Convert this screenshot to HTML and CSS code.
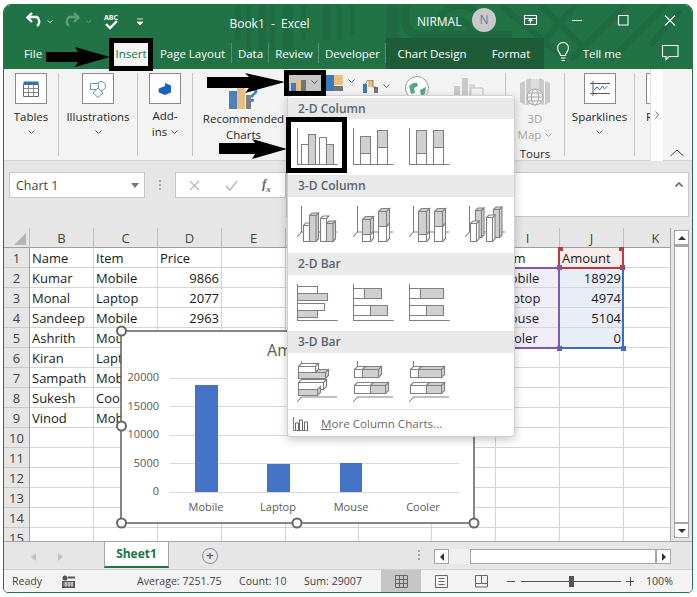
FILE: index.html
```html
<!DOCTYPE html>
<html lang="en">
<head>
<meta charset="utf-8">
<title>Book1 - Excel</title>
<link rel="stylesheet" href="styles.css">
</head>
<body>
<div class="window">
  <header class="head">
    <svg class="head-art" viewBox="4 5 687 64" aria-hidden="true">
      <g fill="#1f6a41">
        <path d="M235 5h5v35h-5zM246 5h5v45h-5zM258 5h7v45h-7zM270 5h4v45h-4zM283 5h9v45h-9zM300 5h5v35h-5zM322 5h8v35h-8zM336 5h5v35h-5zM350 5h4v30h-4z"/>
        <path d="M386 5h12v34h-12z"/>
      </g>
      <g fill="none" stroke="#1f6a41">
        <circle cx="460" cy="30" r="9" stroke-width="6"/>
        <circle cx="460" cy="30" r="24" stroke-width="6"/>
        <path d="M405 5v14q0 16 16 16h90" stroke-width="8"/>
        <path d="M500 5l60 50M540 5l50 50M520 68l55-63M570 60l55-55M610 60l55-55M650 45l30-35" stroke-width="6"/>
      </g>
    </svg>
    <div class="titlebar">
      <svg class="qat" viewBox="20 5 130 33" aria-hidden="true">
        <g fill="none" stroke="#fff" stroke-width="2.4">
          <path d="M37 26a5.6 5.6 0 0 0 0-9H28"/>
          <path d="M32 13l-4.5 4.5 4.5 4.5"/>
        </g>
        <g fill="none" stroke="#5f9e7c" stroke-width="2.4">
          <path d="M69 26a5.6 5.6 0 0 1 0-9H78"/>
          <path d="M74 13l4.5 4.5-4.5 4.5"/>
        </g>
        <g fill="none" stroke="#d7e6dd" stroke-width="1">
          <path d="M47.5 20.5l2.5 2 2.500-2"/>
          <path d="M86 20.500l2.500 2 2.500-2" stroke="#5f9e7c"/>
        </g>
        <text x="104" y="20" class="abc">ABC</text>
        <path d="M106 24l4 4 7-7" fill="none" stroke="#fff" stroke-width="2.4"/>
        <path d="M137 19h6M137 22h6l-3 3z" fill="#fff" stroke="#fff" stroke-width=".8"/>
      </svg>
      <div class="doc-title">Book1&nbsp; -&nbsp; Excel</div>
      <div class="user">NIRMAL</div>
      <div class="avatar">N</div>
      <svg class="win-ctl" viewBox="510 5 181 33" aria-hidden="true">
        <g fill="none" stroke="#fff" stroke-width="1.1">
          <path d="M524.5 15.500h12v9h-12zM524.5 18.500h12M530.500 23.500v-4M528.500 21l2-2 2 2"/>
          <path d="M572 20.500h10"/>
          <path d="M618.500 15.500h9.500v9.500h-9.500z"/>
          <path d="M665 15.500l10 10M675 15.500l-10 10"/>
        </g>
      </svg>
    </div>
    <nav class="tabs">
      <span class="tab tab-file">File</span>
      <span class="tab tab-insert">Insert</span>
      <span class="tab tab-layout sep">Page Layout</span>
      <span class="tab tab-data sep">Data</span>
      <span class="tab tab-review sep">Review</span>
      <span class="tab tab-dev sep">Developer</span>
      <div class="ctx">
        <span class="tab tab-design">Chart Design</span>
        <span class="tab tab-format">Format</span>
      </div>
      <svg class="bulb" viewBox="0 0 14 20" aria-hidden="true">
        <path d="M4.500 13.500c0-3-3-4-3-7.500a5.500 5.500 0 0 1 11 0c0 3.500-3 4.500-3 7.500zM5 16h4.500M5.500 18.500h3.500" fill="none" stroke="#fff" stroke-width="1.1"/>
      </svg>
      <span class="tab tab-tell">Tell me</span>
      <svg class="comment" viewBox="0 0 17 16" aria-hidden="true">
        <path d="M.5.500h15.500v11h-9l-3 3v-3h-3.500z" fill="none" stroke="#fff" stroke-width="1.1"/>
      </svg>
    </nav>
  </header>

  <section class="ribbon">
    <div class="group g-tables">
      <div class="rbtn">
        <span class="box">
          <svg class="ic" viewBox="0 0 16 16" aria-hidden="true"><path d="M.5 3.500h15v12h-15z" fill="#fff" stroke="#666"/><path d="M.5.500h15v3h-15z" fill="#2f6ec0"/><path d="M.5 7.500h15M.5 11.500h15M5.500 3.500v12M10.500 3.500v12" stroke="#888" fill="none"/></svg>
        </span>
        <span class="lbl">Tables</span>
        <svg class="chev" viewBox="0 0 7 4" aria-hidden="true"><path d="M.5.500l3 3 3-3"/></svg>
      </div>
    </div>
    <div class="group g-ill">
      <div class="rbtn">
        <span class="box">
          <svg class="ic ic-ill" viewBox="0 0 18 18" aria-hidden="true"><circle cx="12" cy="6" r="4.500" fill="#fff" stroke="#6b8fbe"/><path d="M1.500 3.500h8v6h-8z" fill="#fff" stroke="#6b8fbe"/><path d="M9 8l5 5-5 4.500-5-4.500z" fill="#fff" stroke="#6b8fbe"/></svg>
        </span>
        <span class="lbl">Illustrations</span>
        <svg class="chev" viewBox="0 0 7 4" aria-hidden="true"><path d="M.5.500l3 3 3-3"/></svg>
      </div>
    </div>
    <div class="group g-add">
      <div class="rbtn">
        <span class="box">
          <svg class="ic ic-add" viewBox="0 0 14 14" aria-hidden="true"><path d="M7 1l6 2.500v7l-6 2.500-3-1.300v-6.500l3-1.200z" fill="#1565c0"/><circle cx="3.500" cy="8.500" r="3" fill="#1565c0"/></svg>
        </span>
        <span class="lbl lbl-two">Add-<br>ins <svg class="chev chev-in" viewBox="0 0 7 4" aria-hidden="true"><path d="M.5.500l3 3 3-3"/></svg></span>
      </div>
    </div>
    <div class="group g-charts">
      <div class="rec">
        <svg class="rec-ic" viewBox="0 0 34 24" aria-hidden="true">
          <path d="M0 6h8v18h-8z" fill="#4f81bd"/><path d="M8 1h8v23h-8z" fill="#e8bf80"/><path d="M17 10h5v14h-5z" fill="#7f7f7f"/>
          <text x="19" y="17" class="qmark">?</text>
        </svg>
        <span class="rec-lbl">Recommended<br>Charts</span>
      </div>
      <div class="mini m-col">
        <svg class="mini-a" viewBox="0 0 15 12" aria-hidden="true"><path d="M0 4h5v8h-5z" fill="#3f79bd"/><path d="M5 0h5v12h-5z" fill="#e8bf80"/><path d="M10 1h5v11h-5z" fill="#737373"/></svg>
        <svg class="chev chev-mini" viewBox="0 0 7 4" aria-hidden="true"><path d="M.5.500l3 3 3-3"/></svg>
      </div>
      <div class="mini m-hier">
        <svg class="mini-b" viewBox="0 0 17 16" aria-hidden="true"><path d="M0 0h8v16h-8z" fill="#3f79bd"/><path d="M8 0h9v10h-9z" fill="#e8bf80"/><path d="M8 11h9v5h-9z" fill="#737373"/></svg>
        <svg class="chev chev-mini" viewBox="0 0 7 4" aria-hidden="true"><path d="M.5.500l3 3 3-3"/></svg>
      </div>
      <div class="mini m-line">
        <svg class="mini-c" viewBox="0 0 15 14" aria-hidden="true"><path d="M0 4h4v9h-4z" fill="#3f79bd"/><path d="M5 0h5v7h-5z" fill="#e8bf80"/><path d="M11 7h4v6h-4z" fill="#737373"/><path d="M2 4l3-4h5v7h3" fill="none" stroke="#444" stroke-width=".6"/></svg>
        <svg class="chev chev-mini" viewBox="0 0 7 4" aria-hidden="true"><path d="M.5.500l3 3 3-3"/></svg>
      </div>
      <svg class="globe" viewBox="0 0 24 24" aria-hidden="true"><circle cx="12" cy="12" r="11.500" fill="#fff" stroke="#9a9a9a"/><path d="M4 10c3-3 6-4 8-3l1 3-4 2 1 5-4 1zM15 14l6-3-1 7-4 2z" fill="#5aa88c"/></svg>
      <svg class="pivot" viewBox="0 0 30 18" aria-hidden="true"><path d="M0 8h6v10h-6zM8 0h6v18h-6z" fill="#c9c9c9"/><path d="M15 6h6v12h-6z" fill="#d9d9d9"/><path d="M17 10h12v8h-12z" fill="#f1f1f1" stroke="#bdbdbd"/></svg>
    </div>
    <div class="group g-tours">
      <svg class="map3d" viewBox="0 0 30 28" aria-hidden="true">
        <path d="M0 5l5-2v24l-5-3zM6 2l5-2v26l-5 1zM19 0l5 2v25l-5-1zM25 3l5 2v19l-5 3z" fill="#c9c9c9"/><path d="M11 1h8v25h-8z" fill="#dcdcdc"/>
        <g fill="#f3f3f3" stroke="#a8a8a8"><circle cx="15" cy="19" r="8"/><ellipse cx="15" cy="19" rx="3.500" ry="8"/></g>
        <path d="M7 19h16M8.500 15h13M8.500 23h13" stroke="#a8a8a8" fill="none"/>
      </svg>
      <span class="lbl lbl-off">3D<br>Map <svg class="chev chev-in chev-off" viewBox="0 0 7 4" aria-hidden="true"><path d="M.5.500l3 3 3-3"/></svg></span>
      <span class="lbl lbl-tours">Tours</span>
    </div>
    <div class="group g-spark">
      <div class="rbtn">
        <span class="box">
          <svg class="ic ic-spark" viewBox="0 0 20 16" aria-hidden="true"><path d="M3 0v15M0 2.500h20M0 12.500h20" stroke="#595959" fill="none"/><path d="M4 9l3-3 2.500 3 3-4 2 3 3-3" stroke="#2f6ec0" fill="none"/></svg>
        </span>
        <span class="lbl">Sparklines</span>
        <svg class="chev" viewBox="0 0 7 4" aria-hidden="true"><path d="M.5.500l3 3 3-3"/></svg>
      </div>
    </div>
    <div class="group g-filt">
      <span class="filt-box"></span>
      <span class="lbl lbl-f">F</span>
    </div>
    <div class="strip">
      <svg class="strip-ar" viewBox="0 0 4 8" aria-hidden="true"><path d="M.5.500l3 3.500-3 3.500"/></svg>
    </div>
    <svg class="collapse" viewBox="0 0 14 8" aria-hidden="true"><path d="M.5 7l6.500-6 6.500 6"/></svg>
  </section>

  <section class="fbar">
    <div class="namebox"><span>Chart 1</span><i class="nb-caret"></i></div>
    <div class="fdots"><i></i><i></i><i></i></div>
    <div class="fxbox">
      <svg class="fx-x" viewBox="0 0 12 12" aria-hidden="true"><path d="M1 1l10 10M11 1l-10 10"/></svg>
      <svg class="fx-c" viewBox="0 0 13 11" aria-hidden="true"><path d="M1 6l4 4 7-9"/></svg>
      <span class="fx-f">f<sub>x</sub></span>
    </div>
    <div class="finput">
      <svg class="f-up" viewBox="0 0 8 5" aria-hidden="true"><path d="M.5 4.500l3.500-3.500 3.500 3.500"/></svg>
    </div>
  </section>

  <section class="sheet">
    <div class="grid-wrap">
    <table class="grid">
      <colgroup>
        <col class="c-rh"><col class="c-n"><col class="c-n"><col class="c-n"><col class="c-n"><col class="c-w"><col class="c-w"><col class="c-n"><col class="c-n"><col class="c-n"><col class="c-n">
      </colgroup>
      <thead>
        <tr><th class="corner"><i class="tri"></i></th><th>B</th><th>C</th><th>D</th><th>E</th><th>F</th><th>G</th><th>H</th><th>I</th><th>J</th><th>K</th></tr>
      </thead>
      <tbody>
        <tr><th>1</th><td>Name</td><td>Item</td><td>Price</td><td></td><td></td><td></td><td></td><td>Item</td><td class="t-r">Amount</td><td></td></tr>
        <tr><th>2</th><td>Kumar</td><td>Mobile</td><td class="num">9866</td><td></td><td></td><td></td><td></td><td class="t-i">Mobile</td><td class="t-j num">18929</td><td></td></tr>
        <tr><th>3</th><td>Monal</td><td>Laptop</td><td class="num">2077</td><td></td><td></td><td></td><td></td><td class="t-i">Laptop</td><td class="t-j num">4974</td><td></td></tr>
        <tr><th>4</th><td>Sandeep</td><td>Mobile</td><td class="num">2963</td><td></td><td></td><td></td><td></td><td class="t-i">Mouse</td><td class="t-j num">5104</td><td></td></tr>
        <tr><th>5</th><td>Ashrith</td><td>Mouse</td><td></td><td></td><td></td><td></td><td></td><td class="t-i">Cooler</td><td class="t-j num">0</td><td></td></tr>
        <tr><th>6</th><td>Kiran</td><td>Laptop</td><td></td><td></td><td></td><td></td><td></td><td></td><td></td><td></td></tr>
        <tr><th>7</th><td>Sampath</td><td>Mobile</td><td></td><td></td><td></td><td></td><td></td><td></td><td></td><td></td></tr>
        <tr><th>8</th><td>Sukesh</td><td>Cooler</td><td></td><td></td><td></td><td></td><td></td><td></td><td></td><td></td></tr>
        <tr><th>9</th><td>Vinod</td><td>Mobile</td><td></td><td></td><td></td><td></td><td></td><td></td><td></td><td></td></tr>
        <tr><th>10</th><td></td><td></td><td></td><td></td><td></td><td></td><td></td><td></td><td></td><td></td></tr>
        <tr><th>11</th><td></td><td></td><td></td><td></td><td></td><td></td><td></td><td></td><td></td><td></td></tr>
        <tr><th>12</th><td></td><td></td><td></td><td></td><td></td><td></td><td></td><td></td><td></td><td></td></tr>
        <tr><th>13</th><td></td><td></td><td></td><td></td><td></td><td></td><td></td><td></td><td></td><td></td></tr>
        <tr><th>14</th><td></td><td></td><td></td><td></td><td></td><td></td><td></td><td></td><td></td><td></td></tr>
        <tr><th>15</th><td></td><td></td><td></td><td></td><td></td><td></td><td></td><td></td><td></td><td></td></tr>
      </tbody>
    </table>
    </div>
    <div class="vscroll">
      <span class="vbtn"><i class="up"></i></span>
      <span class="vthumb"></span>
      <span class="vbtn"><i class="down"></i></span>
    </div>
  </section>

  <section class="tabbar">
    <div class="nav"><i class="nav-l"></i><i class="nav-r"></i></div>
    <div class="sheet-tab">Sheet1</div>
    <div class="add-sheet">+</div>
    <div class="tdots"><i></i><i></i><i></i></div>
    <div class="hscroll">
      <span class="hbtn"><i class="left"></i></span>
      <span class="htrack"></span>
      <span class="hthumb"></span>
      <span class="hbtn"><i class="right"></i></span>
    </div>
  </section>

  <footer class="status">
    <span class="st-ready">Ready</span>
    <svg class="st-macro" viewBox="0 0 13 13" aria-hidden="true"><circle cx="3" cy="3" r="2.500" fill="#555"/><path d="M6 1.500h7v2h-7zM0 6h13v7h-13z" fill="#555"/><path d="M1.500 8h10M1.500 10h10M4 7v5M7 7v5M10 7v5" stroke="#f3f3f3" fill="none" stroke-width=".8"/></svg>
    <span class="st-avg">Average: 7251.75</span>
    <span class="st-cnt">Count: 10</span>
    <span class="st-sum">Sum: 29007</span>
    <span class="view view-on"><svg viewBox="0 0 13 13" aria-hidden="true"><path d="M.5.500h12v12h-12zM.5 4.500h12M.5 8.500h12M4.500.500v12M8.500.500v12"/></svg></span>
    <span class="view"><svg viewBox="0 0 13 13" aria-hidden="true"><path d="M.5.500h12v12h-12zM3.500 3.500h6M3.500 6.500h6M3.500 9.500h6"/></svg></span>
    <span class="view"><svg viewBox="0 0 13 13" aria-hidden="true"><path d="M.5 12v-11.500h12v11.500zM.5 8.500h12M6.500.500v8"/></svg></span>
    <span class="z-minus"></span>
    <span class="z-track"><i></i></span>
    <span class="z-plus"></span>
    <span class="z-val">100%</span>
  </footer>
</div>

<div class="range r-red"><i class="h h1"></i><i class="h h2"></i><i class="h h4"></i></div>
<div class="range r-purple"><i class="h h2"></i><i class="h h4"></i></div>
<div class="range r-blue"><i class="h h4"></i></div>

<svg class="chart" viewBox="114 324 368 206" role="img" aria-label="Amount chart">
  <rect x="121" y="331" width="353" height="192" fill="#fff" stroke="#5f5f5f" stroke-width="1.5"/>
  <text x="297" y="356" class="ch-title">Amount</text>
  <g stroke="#d9d9d9"><path d="M170 378.500h289M170 406.500h289M170 435.500h289M170 463.500h289M170 492.500h289"/></g>
  <g fill="#4472c4"><rect x="195" y="385" width="23" height="107"/><rect x="267" y="464" width="23" height="28"/><rect x="340" y="463" width="22" height="29"/></g>
  <g class="ch-y"><text x="159" y="381">20000</text><text x="159" y="410">15000</text><text x="159" y="438">10000</text><text x="159" y="467">5000</text><text x="159" y="495">0</text></g>
  <g class="ch-x"><text x="206" y="511">Mobile</text><text x="278" y="511">Laptop</text><text x="351" y="511">Mouse</text><text x="423" y="511">Cooler</text></g>
  <g fill="#fff" stroke="#666" stroke-width="2"><circle cx="121.5" cy="331" r="4.500"/><circle cx="121.5" cy="426" r="4.500"/><circle cx="121.5" cy="523" r="4.500"/><circle cx="297" cy="523" r="4.500"/><circle cx="474" cy="523" r="4.500"/></g>
</svg>

<aside class="menu">
  <h4 class="m-head m-first">2-D Column</h4>
  <div class="m-row">
    <svg viewBox="0 0 44 56" aria-hidden="true"><path class="ax" d="M.5 9v36.500h40"/><path class="w" d="M4.500 25.500h7v20h-7zM22.500 18.500h7v27h-7z"/><path class="g" d="M11.500 15.500h7v30h-7zM29.500 25.500h7v20h-7z"/></svg>
    <svg viewBox="0 0 44 56" aria-hidden="true"><path class="ax" d="M.5 9v36.500h40"/><path class="g" d="M7.500 17.500h10v17h-10zM24.500 11.500h10v17h-10z"/><path class="w" d="M7.500 34.500h10v11h-10zM24.500 28.500h10v17h-10z"/></svg>
    <svg viewBox="0 0 44 56" aria-hidden="true"><path class="ax" d="M.5 9v36.500h40"/><path class="g" d="M7.500 11.500h10v23h-10zM24.500 11.500h10v17h-10z"/><path class="w" d="M7.500 34.500h10v11h-10zM24.500 28.500h10v17h-10z"/></svg>
  </div>
  <h4 class="m-head">3-D Column</h4>
  <div class="m-row">
    <svg viewBox="0 0 44 56" aria-hidden="true"><path class="ax" d="M4.500 9v26M0 40l4.500-5h35.500"/>
      <path class="w" d="M6.500 28.500h6v16h-6zM6.500 28.500l2.500-2.500h6l-2.500 2.500"/><path class="g" d="M12.500 18.500h6.500v26h-6.500zM12.500 18.500l2.500-2.500h6.500l-2.500 2.500M19 18.500l2.500-2.500v26l-2.500 2.500z"/>
      <path class="w" d="M23.500 21.500h6v23h-6zM23.500 21.500l2.500-2.500h6l-2.500 2.500"/><path class="g" d="M29.500 26.500h6.500v18h-6.500zM29.500 26.500l2.500-2.500h6.500l-2.500 2.500M36 26.500l2.500-2.500v18l-2.500 2.500z"/></svg>
    <svg viewBox="0 0 44 56" aria-hidden="true"><path class="ax" d="M4.500 9v26M0 40l4.500-5h35.500"/>
      <path class="g" d="M9.500 22.500h8v15h-8zM9.500 22.500l3-3h8l-3 3M17.500 22.500l3-3v15l-3 3z"/><path class="w" d="M9.500 37.500h8v7h-8zM17.500 37.500l3-3v7l-3 3z"/>
      <path class="g" d="M25.500 14.500h8v15h-8zM25.500 14.500l3-3h8l-3 3M33.500 14.500l3-3v15l-3 3z"/><path class="w" d="M25.500 29.500h8v15h-8zM33.500 29.500l3-3v15l-3 3z"/></svg>
    <svg viewBox="0 0 44 56" aria-hidden="true"><path class="ax" d="M4.500 9v26M0 40l4.500-5h35.500"/>
      <path class="g" d="M9.500 14.500h8v23h-8zM9.500 14.500l3-3h8l-3 3M17.500 14.500l3-3v23l-3 3z"/><path class="w" d="M9.500 37.500h8v7h-8zM17.500 37.500l3-3v7l-3 3z"/>
      <path class="g" d="M25.500 14.500h8v15h-8zM25.500 14.500l3-3h8l-3 3M33.500 14.500l3-3v15l-3 3z"/><path class="w" d="M25.500 29.500h8v15h-8zM33.500 29.500l3-3v15l-3 3z"/></svg>
    <svg viewBox="0 0 44 56" aria-hidden="true"><path class="ax" d="M4.500 9v26M0 40l4.500-5h35.500"/>
      <path class="g" d="M10.500 13.500h6v27h-6zM10.500 13.500l2.500-2.500h6l-2.500 2.500M16.500 13.500l2.500-2.500v27l-2.500 2.500z"/><path class="w" d="M5.500 26.500h6v18h-6zM5.500 26.500l2.500-2.500h6l-2.500 2.500M11.500 26.500l2.500-2.500v18l-2.500 2.500z"/>
      <path class="g" d="M28.500 12.500h6v28h-6zM28.500 12.500l2.500-2.500h6l-2.500 2.500M34.500 12.500l2.500-2.500v28l-2.500 2.500z"/><path class="w" d="M21.500 20.500h6v24h-6zM21.500 20.500l2.500-2.500h6l-2.500 2.500M27.500 20.500l2.500-2.500v24l-2.500 2.500z"/></svg>
  </div>
  <h4 class="m-head">2-D Bar</h4>
  <div class="m-row">
    <svg viewBox="0 0 44 56" aria-hidden="true"><path class="ax" d="M.5 9v36.500h40"/><path class="w" d="M.5 11.500h20v7h-20zM.5 28.500h27v7h-27z"/><path class="g" d="M.5 18.500h30v7h-30zM.5 35.500h20v7h-20z"/></svg>
    <svg viewBox="0 0 44 56" aria-hidden="true"><path class="ax" d="M.5 9v36.500h40"/><path class="w" d="M.5 13.500h11v10h-11zM.5 30.500h17v10h-17z"/><path class="g" d="M11.500 13.500h17v10h-17zM17.500 30.500h17v10h-17z"/></svg>
    <svg viewBox="0 0 44 56" aria-hidden="true"><path class="ax" d="M.5 9v36.500h40"/><path class="w" d="M.5 13.500h11v10h-11zM.5 30.500h17v10h-17z"/><path class="g" d="M11.500 13.500h23v10h-23zM17.500 30.500h17v10h-17z"/></svg>
  </div>
  <h4 class="m-head">3-D Bar</h4>
  <div class="m-row">
    <svg viewBox="0 0 44 56" aria-hidden="true"><path class="ax" d="M4.500 8v5M4.500 44h35.500M0 49l4.500-5"/>
      <path class="w" d="M1.500 13.500h17v6h-17zM1.500 13.500l3-3h17l-3 3M18.500 13.500l3-3v6l-3 3z"/><path class="g" d="M1.500 19.500h27v6h-27zM18.500 19.500l3-3h10l-3 3M28.500 19.500l3-3v6l-3 3z"/>
      <path class="w" d="M1.500 29.500h25v7h-25zM1.500 29.500l3-3h25l-3 3M26.500 29.500l3-3v7l-3 3z"/><path class="g" d="M1.500 36.500h19v6h-19zM20.500 36.500l3-3v6l-3 3z"/></svg>
    <svg viewBox="0 0 44 56" aria-hidden="true"><path class="ax" d="M4.500 8v5M4.500 44h35.500M0 49l4.500-5"/>
      <path class="w" d="M1.500 16.500h8v8h-8zM1.500 16.500l3-3h8l-3 3"/><path class="g" d="M9.500 16.500h16v8h-16zM9.500 16.500l3-3h16l-3 3M25.500 16.500l3-3v8l-3 3z"/>
      <path class="w" d="M1.500 32.500h16v8h-16zM1.500 32.500l3-3h16l-3 3"/><path class="g" d="M17.500 32.500h15v8h-15zM17.500 32.500l3-3h15l-3 3M32.500 32.500l3-3v8l-3 3z"/></svg>
    <svg viewBox="0 0 44 56" aria-hidden="true"><path class="ax" d="M4.500 8v5M4.500 44h35.500M0 49l4.500-5"/>
      <path class="w" d="M1.500 16.500h8v8h-8zM1.500 16.500l3-3h8l-3 3"/><path class="g" d="M9.500 16.500h23v8h-23zM9.500 16.500l3-3h23l-3 3M32.500 16.500l3-3v8l-3 3z"/>
      <path class="w" d="M1.500 32.500h16v8h-16zM1.500 32.500l3-3h16l-3 3"/><path class="g" d="M17.500 32.500h15v8h-15zM17.500 32.500l3-3h15l-3 3M32.500 32.500l3-3v8l-3 3z"/></svg>
  </div>
  <div class="m-more">
    <svg viewBox="0 0 16 14" aria-hidden="true"><path class="ax" d="M.5 0v13.500h15"/><path class="more-b" d="M2.500 13v-7h3v7M6.500 13v-10h3v10M11.500 13v-8h3v8"/></svg>
    <span><u>M</u>ore Column Charts...</span>
  </div>
</aside>

<div class="mark mark-insert"></div>
<div class="mark mark-btn"></div>
<div class="mark mark-col"></div>
<svg class="arrow arrow-1" viewBox="0 0 64 20" aria-hidden="true"><path d="M0 5h32l-3-5 35 10-35 10 3-5h-32z"/></svg>
<svg class="arrow arrow-2" viewBox="0 0 78 20" aria-hidden="true"><path d="M0 4h42l-4-4 40 9-40 11 4-5h-42z"/></svg>
<svg class="arrow arrow-3" viewBox="0 0 68 20" aria-hidden="true"><path d="M0 4h36l-3-4 35 10-35 10 3-5h-36z"/></svg>
</body>
</html>
```

FILE: styles.css
```css
* { box-sizing: border-box; }
html, body { margin: 0; padding: 0; }
body {
  position: relative;
  width: 697px;
  height: 597px;
  overflow: hidden;
  background: #fff;
  font-family: "Open Sans", "Liberation Sans", sans-serif;
  font-size: 11.5px;
  color: #262626;
}

.window {
  position: absolute;
  left: 3px;
  top: 4px;
  width: 690px;
  height: 589px;
  border: 1px solid #217346;
  border-radius: 8px 8px 5px 5px;
  overflow: hidden;
  display: flex;
  flex-direction: column;
  background: #e6e6e6;
}

/* header */
.head { position: relative; height: 64px; flex: none; background: #217346; color: #fff; }
.head-art { position: absolute; left: 0; top: 0; width: 688px; height: 64px; }
.titlebar { position: relative; display: flex; align-items: center; height: 33px; }
.qat { width: 130px; height: 33px; margin-left: 16px; flex: none; }
.abc { font-size: 7px; font-weight: 700; fill: #fff; font-family: "Open Sans", sans-serif; }
.doc-title { width: 239px; text-align: center; font-size: 12px; margin-top: 3px; }
.user { margin-left: 28px; width: 44px; text-align: center; font-size: 12px; margin-top: -1px; white-space: nowrap; }
.avatar {
  width: 24px; height: 24px; margin-left: 11px; margin-top: -3px; border-radius: 50%;
  background: #c9c9c9; color: #5d7aa8; text-align: center; line-height: 24px; font-size: 12px; flex: none;
}
.win-ctl { width: 181px; height: 33px; margin-left: 14px; flex: none; }

.tabs { position: relative; display: flex; align-items: stretch; height: 31px; padding-left: 20px; }
.tab { display: flex; align-items: center; justify-content: center; font-size: 11.5px; white-space: nowrap; }
.sep { position: relative; }
.sep::after { content: ""; position: absolute; right: 0; top: 5px; bottom: 6px; width: 1px; background: #4f9170; }
.tab-file { width: 18px; margin-right: 67px; }
.tab-insert { width: 44px; background: #f3f3f3; color: #217346; }
.tab-layout { width: 79px; }
.tab-data { width: 37px; }
.tab-review { width: 50px; }
.tab-dev { width: 67px; }
.ctx { display: flex; width: 158px; background: #1e5c38; margin-left: 0; }
.tab-design { width: 92px; }
.tab-format { width: 66px; }
.bulb { width: 14px; height: 20px; margin: 4px 0 0 12px; flex: none; }
.tab-tell { margin-left: 12px; width: 40px; }
.comment { width: 17px; height: 16px; margin: 7px 0 0 40px; flex: none; }

/* ribbon */
.ribbon { display: flex; height: 92px; flex: none; background: #f3f3f3; padding: 4px 0 5px; border-bottom: 1px solid #d2d2d2; position: relative; }
.group { position: relative; border-right: 1px solid #c6c6c6; flex: none; height: 83px; }
.g-tables { width: 55px; }
.g-ill { width: 79px; }
.g-add { width: 55px; }
.g-charts { width: 313px; display: flex; }
.g-tours { width: 59px; display: flex; flex-direction: column; align-items: center; }
.g-spark { width: 70px; }
.g-filt { width: 15px; overflow: hidden; border-right: 0; }
.rbtn { display: flex; flex-direction: column; align-items: center; }
.box { width: 32px; height: 31px; background: #fff; border: 1px solid #8a8a8a; display: flex; align-items: center; justify-content: center; }
.ic { width: 16px; height: 16px; }
.ic-ill { width: 18px; height: 18px; }
.ic-add { width: 14px; height: 14px; }
.ic-spark { width: 20px; height: 16px; }
.lbl { display: block; text-align: center; line-height: 16px; margin-top: 5px; white-space: nowrap; }
.lbl-two { margin-top: 4px; position: relative; }
.chev { width: 7px; height: 4px; margin-top: 5px; fill: none; stroke: #555; display: block; flex: none; }
.chev-in { display: inline-block; margin: 0 0 2px 1px; }
.chev-off { stroke: #aaa; }
.rec { width: 81px; margin-left: 10px; display: flex; flex-direction: column; align-items: center; flex: none; }
.rec-ic { width: 34px; height: 24px; margin-top: 12px; margin-left: 4px; }
.qmark { font-size: 20px; font-weight: 700; fill: #3f79bd; font-family: "Open Sans", sans-serif; }
.rec-lbl { text-align: center; line-height: 16px; margin-top: 2px; white-space: nowrap; }
.mini { display: flex; align-items: flex-start; flex: none; height: 26px; }
.m-col { width: 42px; margin-left: 0; padding: 9px 0 0 7px; margin-top: -3px; background: #c6c6c6; }
.chev-mini { margin: 4px 0 0 5px; }
.mini-a { width: 15px; height: 12px; }
.m-col .chev-mini { margin: 1px 0 0 5px; }
.m-hier { width: 37px; margin-left: 0; padding-top: 2px; }
.mini-b { width: 17px; height: 16px; }
.m-line { width: 40px; padding-top: 7px; }
.mini-c { width: 15px; height: 14px; }
.globe { width: 24px; height: 24px; margin: 3px 0 0 2px; flex: none; }
.pivot { width: 30px; height: 18px; margin: 5px 0 0 25px; flex: none; }
.map3d { width: 30px; height: 28px; margin-top: 5px; flex: none; }
.lbl-off { color: #a6a6a6; margin-top: 5px; }
.lbl-tours { margin-top: 3px; }
.filt-box { display: block; width: 20px; height: 31px; margin-left: 11px; background: #fff; border: 1px solid #8a8a8a; }
.lbl-f { text-align: left; padding-left: 11px; }
.strip { width: 13px; height: 92px; margin-top: -4px; background: #fff; border-left: 1px solid #e0e0e0; display: flex; align-items: center; justify-content: center; flex: none; }
.strip-ar { width: 4px; height: 8px; fill: none; stroke: #666; margin-right: 0; }
.collapse { width: 14px; height: 8px; fill: none; stroke: #444; margin: 76px 0 0 7px; flex: none; }

/* formula bar */
.fbar { display: flex; align-items: flex-start; height: 67px; flex: none; padding: 11px 0 0 5px; background: #e6e6e6; }
.namebox {
  width: 136px; height: 26px; background: #fff; border: 1px solid #c6c6c6;
  display: flex; align-items: center; justify-content: space-between; padding: 0 5px 0 6px; font-size: 12.5px; color: #444;
}
.nb-caret { width: 0; height: 0; border: 4px solid transparent; border-top: 5px solid #777; border-bottom: 0; }
.fdots { width: 30px; height: 26px; display: flex; flex-direction: column; align-items: center; justify-content: center; gap: 2px; }
.fdots i, .tdots i { width: 2px; height: 2px; background: #a6a6a6; display: block; }
.fxbox { width: 111px; height: 26px; background: #fff; border: 1px solid #c6c6c6; display: flex; align-items: center; padding-left: 13px; flex: none; }
.fx-x { width: 11px; height: 11px; fill: none; stroke: #c0c0c0; stroke-width: 1.6; }
.fx-c { width: 13px; height: 11px; margin-left: 25px; fill: none; stroke: #c0c0c0; stroke-width: 1.8; }
.fx-f { margin-left: 24px; font-family: "Liberation Serif", serif; font-style: italic; font-weight: 700; font-size: 13px; color: #666; }
.fx-f sub { font-size: 9px; }
.finput { flex: 1; height: 45px; margin: 0 3px 0 0; background: #fff; border: 1px solid #c6c6c6; position: relative; display: flex; justify-content: flex-end; padding: 9px 5px 0 0; }
.f-up { width: 8px; height: 5px; fill: none; stroke: #666; stroke-width: 1.6; }

/* sheet */
.sheet { display: flex; height: 314px; flex: none; overflow: hidden; background: #e6e6e6; border-bottom: 1px solid #a6a6a6; }
.grid-wrap { width: 667px; flex: none; overflow: hidden; border-right: 1px solid #a6a6a6; background: #fff; }
.grid { width: 683px; table-layout: fixed; border-collapse: separate; border-spacing: 0; background: #fff; font-size: 13px; color: #1a1a1a; height: 320px; }
.c-rh { width: 26px; } .c-n { width: 64px; } .c-w { width: 73px; }
.grid tr { height: 20px; }
.grid th, .grid td { height: 20px; padding: 0; border-right: 1px solid #d4d4d4; border-bottom: 1px solid #d4d4d4; overflow: hidden; white-space: nowrap; font-weight: 400; }
.grid td { padding: 0 2px; text-align: left; }
.grid td.num { text-align: right; }
.grid th { background: #e6e6e6; text-align: center; color: #444; border-right-color: #bdbdbd; }
.grid tbody th { border-right-color: #9f9f9f; border-bottom-color: #c9c9c9; }
.grid thead th { border-bottom-color: #9f9f9f; }
.corner { position: relative; }
.tri { position: absolute; right: 3px; bottom: 2px; width: 0; height: 0; border-left: 12px solid transparent; border-bottom: 12px solid #b4b4b4; }
.t-i { background: #f1edf6; }
.t-j { background: #e8eef8; }
.t-r { background: #f9eceb; }
.vscroll { width: 21px; padding: 0 0 0 3px; display: flex; flex-direction: column; flex: none; }
.vbtn { width: 15px; height: 15px; background: #fff; border: 1px solid #a6a6a6; display: flex; align-items: center; justify-content: center; flex: none; }
.vbtn:first-child { margin-top: 2px; }
.vbtn:last-child { margin-bottom: 3px; }
.vthumb { flex: 1; width: 15px; background: #fff; border: 1px solid #a6a6a6; border-top-width: 2px; }
.up { border: 4px solid transparent; border-bottom: 4px solid #333; border-top: 0; }
.down { border: 4px solid transparent; border-top: 4px solid #333; border-bottom: 0; }

/* tab bar */
.tabbar { display: flex; align-items: flex-start; height: 28px; flex: none; background: #e6e6e6; border-bottom: 1px solid #d0d0d0; }
.nav { width: 100px; display: flex; gap: 22px; padding: 11px 0 0 27px; flex: none; }
.nav i { border: 4px solid transparent; display: block; }
.nav-l { border-right: 5px solid #c0c0c0 !important; border-left: 0 !important; }
.nav-r { border-left: 5px solid #c0c0c0 !important; border-right: 0 !important; }
.sheet-tab { width: 65px; height: 26px; background: #fff; border-bottom: 2px solid #217346; border-left: 1px solid #a6a6a6; border-right: 1px solid #a6a6a6; color: #217346; font-weight: 700; font-size: 12px; text-align: center; line-height: 24px; flex: none; }
.add-sheet { width: 16px; height: 16px; margin: 6px 0 0 33px; border: 1px solid #8a8a8a; border-radius: 50%; text-align: center; line-height: 13px; color: #666; font-weight: 700; font-size: 13px; flex: none; }
.tdots { width: 4px; margin: 8px 0 0 199px; display: flex; flex-direction: column; gap: 2px; align-items: center; flex: none; }
.hscroll { display: flex; margin: 7px 0 0 13px; height: 15px; flex: none; }
.hbtn { width: 15px; height: 15px; background: #fff; border: 1px solid #a6a6a6; display: flex; align-items: center; justify-content: center; flex: none; }
.htrack { width: 21px; background: #f0f0f0; }
.hthumb { width: 186px; background: #fff; border: 1px solid #a6a6a6; }
.left { border: 4px solid transparent; border-right: 4px solid #333; border-left: 0; }
.right { border: 4px solid transparent; border-left: 4px solid #333; border-right: 0; }

/* status */
.status { display: flex; align-items: center; height: 22px; flex: none; background: #f3f3f3; font-size: 10.6px; color: #444; }
.st-ready { margin-left: 8px; width: 50px; flex: none; }
.st-macro { width: 13px; height: 13px; flex: none; margin-left: 0; }
.st-avg { margin-left: 62px; width: 102px; flex: none; white-space: nowrap; }
.st-cnt { width: 65px; flex: none; white-space: nowrap; }
.st-sum { width: 77px; flex: none; white-space: nowrap; }
.view { width: 40px; height: 22px; display: flex; align-items: center; justify-content: center; flex: none; }
.view svg { width: 13px; height: 13px; fill: none; stroke: #666; }
.view-on { background: #c6c6c6; }
.z-minus { width: 8px; height: 1px; background: #555; margin-left: 6px; flex: none; }
.z-track { position: relative; width: 100px; height: 1px; background: #555; margin-left: 6px; flex: none; }
.z-track i { position: absolute; left: 48px; top: -5px; width: 5px; height: 11px; background: #555; }
.z-plus { position: relative; width: 8px; height: 1px; background: #555; margin-left: 5px; flex: none; }
.z-plus::after { content: ""; position: absolute; left: 3.5px; top: -4px; width: 1px; height: 9px; background: #555; }
.z-val { margin-left: 12px; flex: none; }

/* overlays */
.range { position: absolute; }
.r-purple { left: 494px; top: 267px; width: 66px; height: 82px; border: solid #7f58b4; border-width: 2px 2px 2px 0; }
.r-blue { left: 559px; top: 267px; width: 65px; height: 82px; border: solid #3a6ec4; border-width: 0 2px 2px 0; }
.r-red { left: 558px; top: 248px; width: 66px; height: 21px; border: 2px solid #c0393f; border-top: 0; }
.h { position: absolute; width: 5px; height: 5px; }
.r-red .h { background: #c0393f; }
.r-red .h1 { left: -2px; top: -1px; height: 4px; }
.r-red .h2 { right: -2px; top: -1px; height: 4px; }
.r-red .h4 { right: -3px; bottom: -3px; }
.r-purple .h { background: #7f58b4; }
.r-purple .h2 { right: -4px; top: -4px; }
.r-purple .h4 { right: -4px; bottom: -4px; }
.r-blue .h { background: #3a6ec4; }
.r-blue .h4 { right: -4px; bottom: -4px; }

.chart { position: absolute; left: 114px; top: 324px; width: 368px; height: 206px; }
.chart text { font-family: "Open Sans", sans-serif; }
.ch-title { font-size: 16px; fill: #595959; text-anchor: middle; }
.ch-y text { font-size: 11px; fill: #595959; text-anchor: end; }
.ch-x text { font-size: 11px; fill: #595959; text-anchor: middle; }

.menu {
  position: absolute; left: 287px; top: 95px; width: 228px; height: 342px;
  background: #fff; border: 1px solid #d0d0d0; border-radius: 4px;
  box-shadow: 0 3px 10px rgba(0,0,0,.22); padding-top: 2px;
}
.m-head { margin: 0; height: 22px; background: #e9e9e9; color: #5b6570; font-size: 12px; font-weight: 600; line-height: 21px; padding-left: 10px; }
.m-first { height: 21px; }
.m-row { display: grid; grid-template-columns: repeat(4, 56px); height: 56px; padding-left: 9px; }
.m-row svg { width: 44px; height: 56px; display: block; }
.ax { fill: none; stroke: #808080; stroke-width: 1.1; }
.w { fill: #fff; stroke: #808080; stroke-width: 1.1; }
.g { fill: #d0d0d0; stroke: #808080; stroke-width: 1.1; }
.m-more { display: flex; align-items: center; height: 28px; margin-top: 0; border-top: 1px solid #e4e4e4; padding-left: 5px; color: #6a6a6a; font-size: 11.6px; }
.m-more svg { width: 16px; height: 14px; margin-right: 12px; flex: none; }
.more-b { fill: none; stroke: #666; }

.mark { position: absolute; border: 5px solid #000; }
.mark-insert { left: 109px; top: 38px; width: 44px; height: 33px; }
.mark-btn { left: 284px; top: 70px; width: 42px; height: 26px; }
.mark-col { left: 286px; top: 117px; width: 61px; height: 56px; }
.arrow { position: absolute; fill: #000; height: 20px; }
.arrow-1 { left: 46px; top: 47px; width: 64px; }
.arrow-2 { left: 207px; top: 73px; width: 78px; }
.arrow-3 { left: 219px; top: 139px; width: 68px; }
```
